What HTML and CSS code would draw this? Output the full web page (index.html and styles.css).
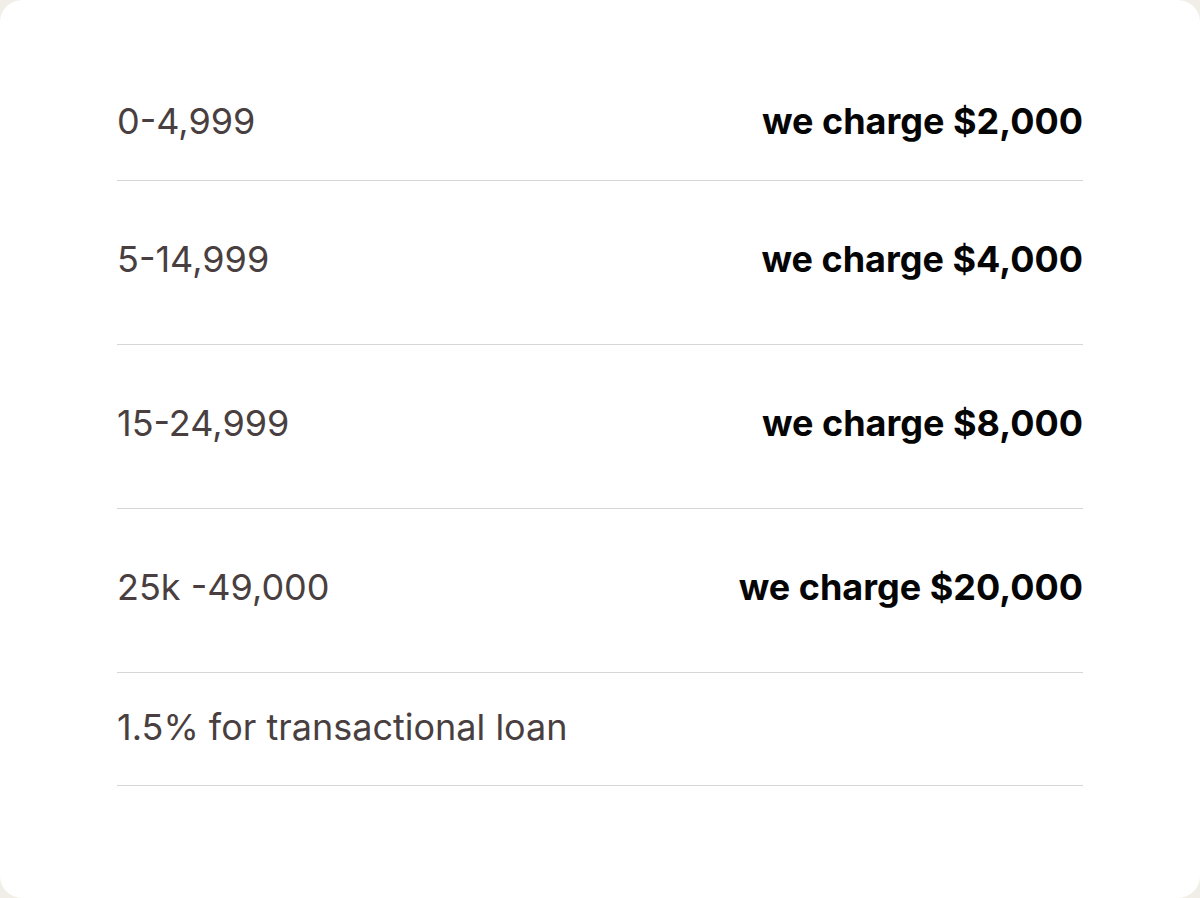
FILE: index.html
```html
<!DOCTYPE html>
<html lang="en">
<head>
<meta charset="utf-8">
<title>Pricing</title>
<link rel="stylesheet" href="styles.css">
</head>
<body>
<div class="card">
  <div class="list">
    <div class="row row-first">
      <span class="range">0-4,999</span>
      <span class="price">we charge $2,000</span>
    </div>
    <div class="row row-mid">
      <span class="range">5-14,999</span>
      <span class="price">we charge $4,000</span>
    </div>
    <div class="row row-mid">
      <span class="range">15-24,999</span>
      <span class="price">we charge $8,000</span>
    </div>
    <div class="row row-mid">
      <span class="range">25k -49,000</span>
      <span class="price">we charge $20,000</span>
    </div>
    <div class="row row-last">
      <span class="range">1.5% for transactional loan</span>
    </div>
  </div>
</div>
</body>
</html>
```
FILE: styles.css
```css
html, body {
  margin: 0;
  padding: 0;
  background: #f1eee8;
}
body {
  width: 1200px;
  height: 898px;
  overflow: hidden;
  font-family: "Inter", "Liberation Sans", sans-serif;
}
.card {
  box-sizing: border-box;
  width: 1200px;
  height: 898px;
  background: #ffffff;
  border-radius: 22px;
  padding: 101px 117px 0 117px;
}
.list {
  display: flex;
  flex-direction: column;
}
.row {
  display: flex;
  justify-content: space-between;
  align-items: center;
  line-height: 40px;
  border-bottom: 1.5px solid #d6d6d6;
}
.row-first { padding: 0 0 39px; }
.row-mid { padding: 58px 0 65px; }
.row-last { padding: 34px 0 38px; }
.range {
  font-size: 36px;
  font-weight: 400;
  color: #4a3f40;
}
.price {
  font-size: 36px;
  font-weight: 700;
  color: #050505;
}
```
